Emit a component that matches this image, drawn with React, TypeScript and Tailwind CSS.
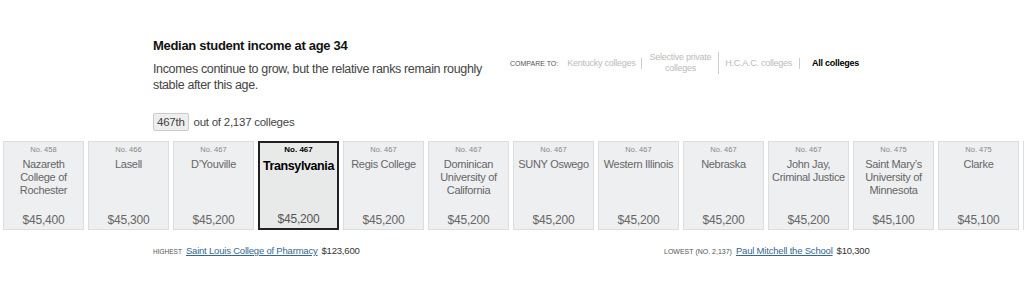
import React from 'react';

interface College {
  rank: string;
  name: string;
  income: string;
  current?: boolean;
}

const colleges: College[] = [
  { rank: 'No. 458', name: 'Nazareth College of Rochester', income: '$45,400' },
  { rank: 'No. 466', name: 'Lasell', income: '$45,300' },
  { rank: 'No. 467', name: 'D\u2019Youville', income: '$45,200' },
  { rank: 'No. 467', name: 'Transylvania', income: '$45,200', current: true },
  { rank: 'No. 467', name: 'Regis College', income: '$45,200' },
  { rank: 'No. 467', name: 'Dominican University of California', income: '$45,200' },
  { rank: 'No. 467', name: 'SUNY Oswego', income: '$45,200' },
  { rank: 'No. 467', name: 'Western Illinois', income: '$45,200' },
  { rank: 'No. 467', name: 'Nebraska', income: '$45,200' },
  { rank: 'No. 467', name: 'John Jay, Criminal Justice', income: '$45,200' },
  { rank: 'No. 475', name: 'Saint Mary\u2019s University of Minnesota', income: '$45,100' },
  { rank: 'No. 475', name: 'Clarke', income: '$45,100' },
];

const CollegeCard: React.FC<{ college: College }> = ({ college }) => {
  if (college.current) {
    return (
      <div className="w-[81px] h-[89px] shrink-0 flex flex-col items-center border-2 border-[#222] bg-[#e8eaea] px-[1px] pt-[1px] pb-[1px]">
        <div className="text-[8px] leading-[12px] font-bold text-black">{college.rank}</div>
        <div className="mt-[3px] text-[12.5px] leading-[15px] font-bold tracking-[-0.4px] text-black text-center whitespace-nowrap">
          {college.name}
        </div>
        <div className="mt-auto text-[12px] leading-[16px] tracking-[-0.2px] text-[#555]">{college.income}</div>
      </div>
    );
  }

  return (
    <div className="w-[81px] h-[89px] shrink-0 flex flex-col items-center border border-[#dcdddf] bg-[#eeeff1] px-[2px] pt-[2px] pb-[1px]">
      <div className="text-[7.5px] leading-[12px] text-[#888]">{college.rank}</div>
      <div className="mt-[2px] text-[11px] leading-[13px] tracking-[-0.3px] text-[#666] text-center">{college.name}</div>
      <div className="mt-auto text-[12px] leading-[16px] tracking-[-0.2px] text-[#666]">{college.income}</div>
    </div>
  );
};

export default function App() {
  return (
    <div className='w-[1024px] h-[304px] bg-white overflow-hidden font-["Liberation_Sans",Arial,sans-serif]'>
      {/* 头部 */}
      <div className="flex pl-[153px] pt-[37px]">
        <div className="w-[357px] shrink-0">
          <h2 className="text-[13px] leading-[18px] font-bold tracking-[-0.3px] text-[#121212]">
            Median student income at age 34
          </h2>
          <p className="mt-[6px] w-[340px] text-[12.5px] leading-[16px] tracking-[-0.35px] text-[#444]">
            Incomes continue to grow, but the relative ranks remain roughly stable after this age.
          </p>
          <div className="mt-[20px] flex items-center gap-[5px] text-[11.5px] leading-[16px] tracking-[-0.25px] text-[#444]">
            <span className="border border-[#ccc] bg-[#eee] px-[3px] rounded-[2px]">467th</span>
            <span>out of 2,137 colleges</span>
          </div>
        </div>

        {/* 比较选项 */}
        <div className="flex items-center self-start mt-[15px] text-[9px] leading-[11px] tracking-[-0.25px]">
          <span className="text-[7px] uppercase text-[#555] mr-[9px] tracking-normal">Compare to:</span>
          <span className="text-[#bbb] pr-[5px] border-r border-[#ccc]">Kentucky colleges</span>
          <span className="text-[#bbb] text-center pl-[8px] pr-[7px] border-r border-[#ccc]">
            Selective private
            <br />
            colleges
          </span>
          <span className="text-[#bbb] pl-[6px] pr-[7px] border-r border-[#ccc]">H.C.A.C. colleges</span>
          <span className="pl-[12px] font-bold text-black">All colleges</span>
        </div>
      </div>

      {/* 学校卡片 */}
      <div className="mt-[10px] flex gap-[4px] pl-[3px]">
        {colleges.map((c, i) => (
          <CollegeCard key={i} college={c} />
        ))}
        <div className="w-[81px] h-[89px] shrink-0 border border-[#dcdddf] bg-[#eeeff1]" />
      </div>

      {/* 最高 / 最低 */}
      <div className="mt-[14px] flex pl-[153px] text-[9.5px] leading-[13px] tracking-[-0.2px] text-[#333]">
        <div className="w-[511px] shrink-0 flex items-baseline gap-[4px]">
          <span className="text-[6.5px] uppercase text-[#555] tracking-normal">Highest</span>
          <a href="#" className="text-[#326891] underline">Saint Louis College of Pharmacy</a>
          <span>$123,600</span>
        </div>
        <div className="flex items-baseline gap-[4px]">
          <span className="text-[7px] uppercase text-[#555] tracking-normal">Lowest (No. 2,137)</span>
          <a href="#" className="text-[#326891] underline">Paul Mitchell the School</a>
          <span>$10,300</span>
        </div>
      </div>
    </div>
  );
}
